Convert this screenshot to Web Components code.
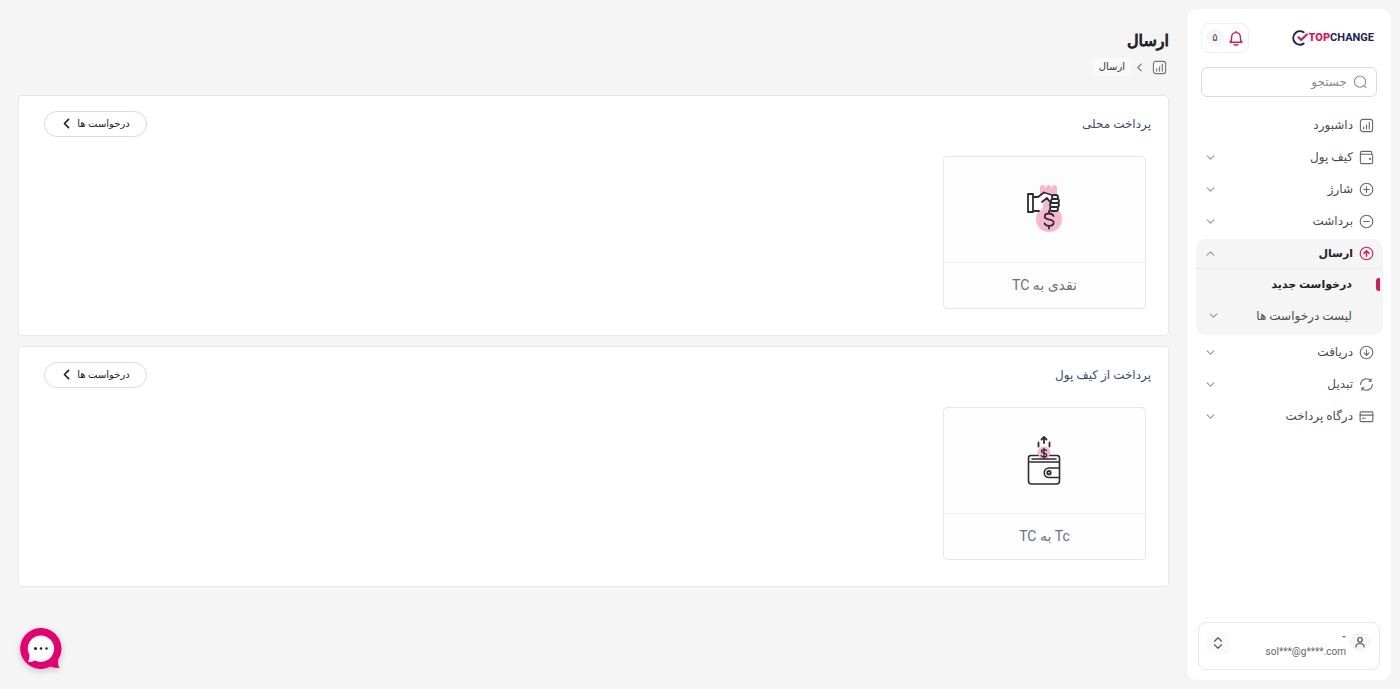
<!DOCTYPE html>
<html lang="fa" dir="rtl">
<head>
<meta charset="utf-8">
<meta name="viewport" content="width=device-width, initial-scale=1">
<title>ارسال</title>
<style>
  :root {
    --page: #f5f5f5; --pink: #d8195b; --line: #e8e8ea; --ink: #222226;
    --muted: #4c4c50; --slate: #667183; --navy: #3b4c6e;
    font-family: Roboto, "DejaVu Sans", sans-serif;
  }
  body { margin: 0; background: var(--page); color: var(--ink); }
</style>
</head>
<body>
<tc-app>
  <tc-sidebar slot="side">
    <tc-item icon="chart" flat>داشبورد</tc-item>
    <tc-item icon="wallet">کیف پول</tc-item>
    <tc-item icon="plus">شارژ</tc-item>
    <tc-item icon="minus">برداشت</tc-item>
    <tc-group icon="up" label="ارسال">
      <tc-subitem active>درخواست جدید</tc-subitem>
      <tc-subitem more>لیست درخواست ها</tc-subitem>
    </tc-group>
    <tc-item icon="down">دریافت</tc-item>
    <tc-item icon="swap">تبدیل</tc-item>
    <tc-item icon="card">درگاه پرداخت</tc-item>
  </tc-sidebar>
  <tc-heading>ارسال</tc-heading>
  <tc-panel>
    <span slot="title">پرداخت محلی</span>
    <tc-tile icon="cash">نقدی به TC</tc-tile>
  </tc-panel>
  <tc-panel>
    <span slot="title">پرداخت از کیف پول</span>
    <tc-tile icon="send">Tc به TC</tc-tile>
  </tc-panel>
  <tc-chat slot="chat"></tc-chat>
</tc-app>
<script>
const icons = {
  chart: ['0 0 16 16', '<rect x="1.5" y="1.5" width="13" height="13" rx="2.5"/><path d="M5 9.5v2.3M8 7.5v4.3M11 4.5v7.3"/>'],
  wallet: ['0 0 16 16', '<path d="M13.5 4.5V2.5a1 1 0 0 0-1-1H3a1.5 1.5 0 0 0 0 3h10a1.5 1.5 0 0 1 1.5 1.5v7a1.5 1.5 0 0 1-1.5 1.5H3A1.5 1.5 0 0 1 1.5 13V3"/><path d="M11.5 9.5h.6" style="stroke-width:1.8"/>'],
  plus: ['0 0 16 16', '<circle cx="8" cy="8" r="6.7"/><path d="M8 5v6M5 8h6"/>'],
  minus: ['0 0 16 16', '<circle cx="8" cy="8" r="6.7"/><path d="M5 8h6"/>'],
  up: ['0 0 16 16', '<circle cx="8" cy="8" r="6.7"/><path d="M8 11V5.2M5.4 7.6 8 5l2.6 2.6" style="stroke-width:1.6"/>'],
  down: ['0 0 16 16', '<circle cx="8" cy="8" r="6.7"/><path d="M8 5v5.8M5.4 8.4 8 11l2.6-2.6"/>'],
  swap: ['0 0 16 16', '<path d="M1.8 8A6.2 6.2 0 0 1 12.8 4.2M12.9 2v2.5h-2.4M14.2 8A6.2 6.2 0 0 1 3.2 11.8M3.1 14v-2.5h2.4"/>'],
  card: ['0 0 16 16', '<rect x="1.2" y="3" width="13.6" height="10.5" rx="1.2"/><path d="M1.2 6.5h13.6M3.6 9.800h3"/>'],
  search: ['0 0 16 16', '<circle cx="8" cy="7.6" r="6.4"/><path d="m12.500 12 2.500 2.500"/>'],
  bell: ['0 0 16 16', '<path d="M2 12.3c1.4-1.3 1.7-2.6 1.7-5.4a4.3 4.3 0 0 1 8.6 0c0 2.8.3 4.1 1.7 5.4zM6.2 14.6q1.8 1 3.6 0M8 2.6v-1.1"/>'],
  user: ['0 0 16 16', '<circle cx="8" cy="5" r="3"/><path d="M2.5 14.5c0-3 2-4.500 5.500-4.500s5.500 1.500 5.500 4.500"/>'],
  sort: ['0 0 16 16', '<path d="M4 6l4-4 4 4M4 10l4 4 4-4"/>'],
  chevdown: ['0 0 16 16', '<path d="m2 5 6 6 6-6"/>'],
  chevup: ['0 0 16 16', '<path d="m2 11 6-6 6 6"/>'],
  left: ['0 0 16 16', '<path d="M11 2 5 8l6 6"/>'],
  mark: ['0 0 20 20', '<path d="M14.5 2.8A8.4 8.4 0 1 0 14.5 17" stroke="#17264f" style="stroke-width:2.5"/><path d="m8 9 3.500 3.500 7-7" stroke="#d8195b" style="stroke-width:2.6"/>'],
  cash: ['1 1 36 50', '<g fill="#f8b7cf" stroke="none"><path d="M14 3q0-2 2.500-2T19 3q.5 2 1 0 .5-2 2.500-2T25 3q.5 2 1 0 .5-2 2.500-2T31 3v11H14z"/><circle cx="23" cy="35" r="13"/><path d="M19 15h10v12H15z"/></g><path d="M7 12h5l6-4q9 1 12 5l-5 6-4-4-5 3 1 6-3 3H7z" fill="#fff" stroke="none"/><path d="M7 13h5l6-4.500 8 2.500M7 27h6M16 18l5-4 3 4"/><path d="M2 10h5v18H2z" fill="#fdfdfd"/><g fill="#fff"><rect x="26" y="11" width="6" height="4" rx="2"/><rect x="25" y="15" width="8" height="4" rx="2"/><rect x="24" y="19" width="9" height="4" rx="2"/><rect x="24" y="23" width="8" height="4" rx="2"/></g><path d="M27.500 32q-1-2.500-4.500-2.500-4.300 0-4.300 3c0 4.500 9 1.700 9 6 0 3-2 3.300-4.500 3.300-4 0-4.700-2.500-4.700-2.500M23 27v2.500M23 42v2.500"/>'],
  send: ['1 1 34 50', '<circle cx="17" cy="18" r="6.500" fill="#f8b7cf" stroke="none"/><path d="M17 8V2M14.500 4.500 17 2l2.500 2.500M11.500 7.500v4M22.500 7.500v4"/><path d="M19.500 15.600q-.8-1-2.500-1-2.500 0-2.500 1.600c0 2.500 5.200 1.300 5.200 3.700 0 1.700-1.400 1.900-2.700 1.900q-2 0-2.800-1.200M17 13.500v9.500" style="stroke-width:1.4"/><path d="M11 20.500H4a2.500 2.500 0 0 0-2.500 2.500v23a3 3 0 0 0 3 3h25a3 3 0 0 0 3-3V23a2.500 2.500 0 0 0-2.500-2.500h-7M1.500 26q.5 1 2.500 1h28.500M5 24h24M32.500 33H22a4.700 4.700 0 0 0 0 9.500h10.500" style="stroke-width:1.600"/><circle cx="22" cy="37.700" r="1.700"/>']
};

const define = (name, markup, setup) => {
  const template = document.createElement('template');
  template.innerHTML = markup;
  customElements.define(name, class extends HTMLElement {
    connectedCallback() {
      if (this.shadowRoot) return;
      const root = this.attachShadow({ mode: 'open' });
      root.append(template.content.cloneNode(true));
      if (setup) setup(this, root);
    }
  });
};
const passIcon = (host, root) => root.querySelector('.lead').setAttribute('name', host.getAttribute('icon'));

customElements.define('tc-icon', class extends HTMLElement {
  static observedAttributes = ['name'];
  constructor() { super(); this.attachShadow({ mode: 'open' }); }
  attributeChangedCallback() {
    const [box, shape] = icons[this.getAttribute('name')];
    this.shadowRoot.innerHTML = `<style>:host{display:block;flex:none;width:var(--w,14px);height:var(--h,var(--w,14px))}svg{display:block;width:100%;height:100%;overflow:visible;stroke-width:var(--sw,1.2)}</style>
      <svg viewBox="${box}" fill="none" stroke="currentColor" stroke-linecap="round" stroke-linejoin="round" aria-hidden="true">${shape}</svg>`;
  }
});

define('tc-app', `<style>
  :host{display:flex;gap:18px;min-height:100vh;box-sizing:border-box;padding:9px}
  ::slotted(tc-sidebar){flex:0 0 204px;min-width:0}
  main{flex:1;min-width:0;padding:20px 0 0;margin-left:9px}
  ::slotted(tc-panel){margin-bottom:10px}
  ::slotted(tc-chat){position:fixed;left:20px;bottom:19px}
</style><slot name="side"></slot><main><slot></slot></main><slot name="chat"></slot>`);

define('tc-sidebar', `<style>
  :host{display:flex;flex-direction:column;box-sizing:border-box;background:#fff;border-radius:10px;padding:14px 8px 10px 9px}
  header{display:flex;justify-content:space-between;align-items:center;padding:0 9px 0 5px;height:30px}
  .logo{display:flex;align-items:center;direction:ltr;font:700 11px/16px Roboto,sans-serif;color:#17264f;text-decoration:none;gap:1px}
  .logo b{color:var(--pink)} .logo tc-icon{--w:16px}
  .alerts{display:flex;align-items:center;gap:4px;height:30px;padding:0 4px;border:1px solid #f0f0f1;border-radius:8px;background:#fff;font:inherit;font-size:10px;color:#444}
  .alerts tc-icon{--w:16px;--sw:1.4;color:var(--pink)}
  .alerts span{width:18px;line-height:18px;border-radius:9px;background:#f6f6f6}
  .search{display:flex;align-items:center;gap:6px;height:28px;margin:14px 6px 13px 5px;padding:0 9px;border:1px solid #dcdcde;border-radius:6px;color:#8b8b8f}
  .search tc-icon{--w:14px}
  input{flex:1;width:0;min-width:0;border:0;outline:0;padding:0;background:none;font:inherit;font-size:12px}
  input::placeholder{color:#8b8b8f;opacity:1}
  nav{display:flex;flex-direction:column;gap:2px}
  .account{display:flex;align-items:center;gap:4px;margin:auto 3px 0 2px;height:48px;padding:0 9px 0 8px;border:1px solid var(--line);border-radius:8px;background:#fff;font:inherit;font-size:10px;line-height:15px;color:#66666a}
  .avatar{padding:4px;margin-bottom:8px;border-radius:10px;background:#f6f6f6;color:#555;--w:12px;--sw:1.6}
  .who{margin:0 0 4px auto;text-align:right;direction:ltr} .who b{display:block}
  .swap{padding:4px;margin-bottom:6px;border-radius:4px;background:#fafafa;--w:14px;--sw:1.3;color:#555}
</style>
<header><a class="logo" href="#"><tc-icon name="mark"></tc-icon><span><b>TOP</b>CHANGE</span></a>
<button class="alerts" type="button"><tc-icon name="bell"></tc-icon><span>۵</span></button></header>
<label class="search"><tc-icon name="search"></tc-icon><input type="search" placeholder="جستجو" aria-label="جستجو"></label>
<nav><slot></slot></nav>
<button class="account" type="button"><tc-icon class="avatar" name="user"></tc-icon><span class="who"><b>-</b>sol***@g****.com</span><tc-icon class="swap" name="sort"></tc-icon></button>`);

const rowStyle = `a{display:flex;align-items:center;gap:6px;height:30px;padding:0 9px 0 10px;font-size:12px;color:var(--muted);text-decoration:none}
  .lead{--w:15px;color:#6a6a6e}.chev{--w:9px;--sw:2;margin-right:auto;color:#98989c}`;

define('tc-item', `<style>:host{display:block}:host([flat]) .chev{display:none}${rowStyle}</style>
<a href="#"><tc-icon class="lead"></tc-icon><span><slot></slot></span><tc-icon class="chev" name="chevdown"></tc-icon></a>`, passIcon);

define('tc-group', `<style>:host{display:block;background:var(--page);border-radius:10px;padding-bottom:4px;margin-top:1px}${rowStyle}
  a{height:29px;border-bottom:1px solid #eaeaeb;color:var(--ink);font-size:11px;font-weight:700}.lead{color:var(--pink)}</style>
<a href="#" aria-expanded="true"><tc-icon class="lead"></tc-icon><span></span><tc-icon class="chev" name="chevup"></tc-icon></a><slot></slot>`,
(host, root) => { passIcon(host, root); root.querySelector('span').textContent = host.getAttribute('label'); });

define('tc-subitem', `<style>:host{display:block}${rowStyle}
  a{position:relative;height:31px;padding:0 31px 0 13px}
  :host(:not([more])) .chev{display:none}
  :host([active]) a{color:var(--ink);font-size:11px;font-weight:700}
  :host([active]) a::before{content:"";position:absolute;right:3px;top:9px;width:4px;height:13px;border-radius:3px 0 0 3px;background:var(--pink)}
</style><a href="#"><span><slot></slot></span><tc-icon class="chev" name="chevdown"></tc-icon></a>`);

define('tc-heading', `<style>:host{display:block;margin-bottom:18px}
  h1{margin:0;font-size:16px;line-height:24px;font-weight:400;-webkit-text-stroke:1px currentColor}
  nav{display:flex;align-items:center;gap:4px;height:20px;margin-top:4px;padding-right:2px;color:#77777c}
  a{color:inherit} a tc-icon{--w:15px} .sep{--w:9px;--sw:2;margin-right:4px}
  span{padding:0 6px;font-size:10px;line-height:18px;border-radius:4px;background:#f9f9f9;color:#333}
</style><h1><slot></slot></h1>
<nav><a href="#" aria-label="داشبورد"><tc-icon name="chart"></tc-icon></a><tc-icon class="sep" name="left"></tc-icon><span></span></nav>`,
(host, root) => { root.querySelector('span').textContent = host.textContent; });

define('tc-panel', `<style>:host{display:block;background:#fff;border:1px solid var(--line);border-radius:4px;padding:15px 17px 26px 25px}
  header{display:flex;justify-content:space-between;align-items:center;height:26px;margin-bottom:19px}
  h2{margin:0;font-size:12px;line-height:20px;font-weight:400;color:var(--navy)}
  button{display:flex;align-items:center;justify-content:center;gap:5px;width:103px;height:26px;padding:0 0 2px;border:1px solid #dcdcde;border-radius:13px;background:#fff;color:var(--ink);font:inherit;font-size:10px}
  button tc-icon{--w:11px;--sw:2.4}
  .tiles{display:flex;gap:20px;padding-right:5px}
</style><header><h2><slot name="title"></slot></h2><button type="button">درخواست ها<tc-icon name="left"></tc-icon></button></header><div class="tiles"><slot></slot></div>`);

define('tc-tile', `<style>:host{display:block;width:203px}
  a{display:block;background:#fdfdfd;border:1px solid var(--line);border-radius:4px;color:var(--slate);text-decoration:none;text-align:center}
  div{display:grid;place-items:center;height:105px;border-bottom:1px solid #f0f0f1;color:#2d2d30}
  .lead{--w:36px;--h:50px;--sw:1.8} p{margin:0;font-size:14px;line-height:45px}
</style><a href="#"><div><tc-icon class="lead"></tc-icon></div><p><slot></slot></p></a>`, passIcon);

define('tc-chat', `<style>:host{display:block}button{display:block;padding:0;border:0;background:none;filter:drop-shadow(0 2px 3px #0003)}svg{display:block}</style>
<button type="button" aria-label="گفتگو"><svg width="42" height="42" viewBox="0 0 42 42"><path d="M20.500 0a20.500 20.500 0 1 0 10 38.500q4 1.500 9 1.500-2-4-1.500-8A20.500 20.500 0 0 0 20.500 0" fill="#e6006f"/><path d="M20.500 7.500A13 13 0 0 0 9.500 27q0 4-1.500 7 4 0 7-1.500A13.200 13.200 0 1 0 20.500 7.500" fill="#fff"/><g fill="#222"><circle cx="15.500" cy="20.500" r="1.500"/><circle cx="21" cy="20.500" r="1.300"/><circle cx="26.500" cy="20.500" r="1.200"/></g></svg></button>`);
</script>
</body>
</html>
